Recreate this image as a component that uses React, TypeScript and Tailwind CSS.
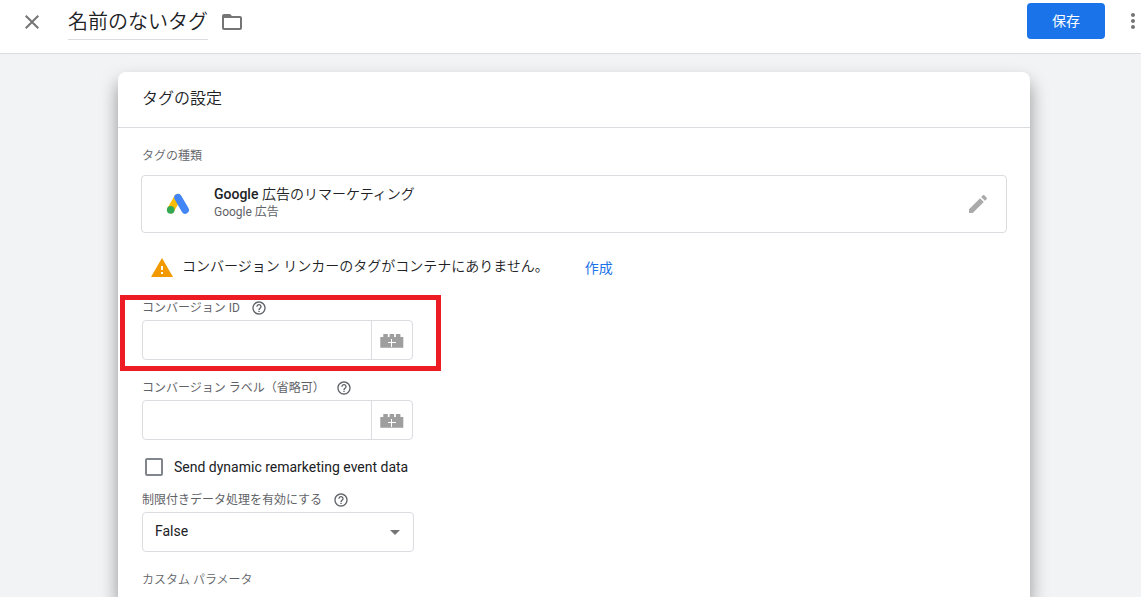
import { useState, type ReactNode } from "react";

function HelpIcon() {
  return (
    <svg viewBox="0 0 24 24" className="size-4 fill-current" aria-hidden="true">
      <path d="M11 18h2v-2h-2v2zm1-16C6.48 2 2 6.48 2 12s4.48 10 10 10 10-4.48 10-10S17.52 2 12 2zm0 18c-4.41 0-8-3.59-8-8s3.59-8 8-8 8 3.59 8 8-3.59 8-8 8zm0-14c-2.21 0-4 1.79-4 4h2c0-1.1.9-2 2-2s2 .9 2 2c0 2-3 1.75-3 5h2c0-2.25 3-2.5 3-5 0-2.21-1.79-4-4-4z" />
    </svg>
  );
}

function BrickIcon() {
  return (
    <svg viewBox="0 0 24 16" className="h-4 w-6" aria-hidden="true">
      <path fill="#9e9e9e" d="M0.300 5H3.300V2h4.500v3h1.800V2h4.500v3h1.800V2h4.500v3h2.900v10.700h-23z" />
      <path fill="#fff" d="M11 7h1v3h4v1h-4v4h-1v-4H8v-1h3z" />
    </svg>
  );
}

function AdsLogo() {
  return (
    <svg viewBox="0 0 24 24" className="size-6 shrink-0" aria-hidden="true">
      <path d="M11.700 5.600 4.800 17.600" stroke="#fbbc04" strokeWidth="7.200" strokeLinecap="round" />
      <path d="M12 5.600 19.200 18" stroke="#4285f4" strokeWidth="7.500" strokeLinecap="round" />
      <circle cx="4.700" cy="17.900" r="3.800" fill="#34a853" />
    </svg>
  );
}

function FieldLabel({ htmlFor, help, children }: { htmlFor: string; help?: boolean; children: ReactNode }) {
  return (
    <div className="flex h-4 items-center gap-[11px] text-xs text-[#5f6368]">
      <label htmlFor={htmlFor}>{children}</label>
      {help && (
        <button type="button" aria-label="ヘルプ">
          <HelpIcon />
        </button>
      )}
    </div>
  );
}

function VariableField({ id, label }: { id: string; label: string }) {
  return (
    <div className="flex flex-col gap-1">
      <FieldLabel htmlFor={id} help>
        {label}
      </FieldLabel>
      <div className="flex h-10 w-[271px] rounded border border-[#dadce0]">
        <input id={id} type="text" className="min-w-0 flex-1 px-3 text-sm outline-none" />
        <button
          type="button"
          aria-label="変数を選択"
          className="flex w-[41px] items-center justify-center border-l border-[#dadce0]"
        >
          <BrickIcon />
        </button>
      </div>
    </div>
  );
}

export default function App() {
  const [name, setName] = useState("名前のないタグ");

  return (
    <div className="flex min-h-screen flex-col bg-[#f1f3f4] font-[Roboto,'Noto_Sans_CJK_JP',sans-serif] text-[#202124]">
      <header className="flex h-[54px] items-start overflow-hidden border-b border-[#dadce0] bg-white pl-5 text-[#757575]">
        <button type="button" aria-label="閉じる" className="mt-[10px]">
          <svg viewBox="0 0 24 24" className="size-6 fill-current">
            <path d="M19 6.410 17.590 5 12 10.590 6.410 5 5 6.410 10.590 12 5 17.590 6.410 19 12 13.410 17.590 19 19 17.590 13.410 12z" />
          </svg>
        </button>
        <input
          aria-label="タグ名"
          value={name}
          onChange={(e) => setName(e.target.value)}
          className="mt-1 ml-6 h-9 w-[140px] border-b border-[#dadce0] pb-[2px] text-xl font-[350] text-[#202124] outline-none"
        />
        <button type="button" aria-label="フォルダ" className="mt-[10px] ml-3">
          <svg viewBox="0 0 24 24" className="size-6 fill-current">
            <path d="M20 6h-8l-2-2H4c-1.100 0-1.990.9-1.990 2L2 18c0 1.100.9 2 2 2h16c1.100 0 2-.9 2-2V8c0-1.100-.9-2-2-2zm0 12H4V8h16v10z" />
          </svg>
        </button>
        <button
          type="button"
          className="mt-[3px] ml-auto h-9 w-[78px] rounded bg-[#1a73e8] text-sm text-white"
        >
          保存
        </button>
        <button type="button" aria-label="その他" className="mt-[9px] -mr-1 ml-4 shrink-0">
          <svg viewBox="0 0 24 24" className="size-6 fill-current">
            <path d="M12 8c1.100 0 2-.9 2-2s-.9-2-2-2-2 .9-2 2 .9 2 2 2zm0 2c-1.100 0-2 .9-2 2s.9 2 2 2 2-.9 2-2-.9-2-2-2zm0 6c-1.100 0-2 .9-2 2s.9 2 2 2 2-.9 2-2-.9-2-2-2z" />
          </svg>
        </button>
      </header>

      <main className="flex flex-1 flex-col overflow-hidden pt-[18px] pr-[111px] pl-[118px]">
        <section className="flex-1 rounded-t-lg bg-white shadow-[0_10px_18px_rgba(0,0,0,0.4)]">
          <h2 className="flex h-14 items-center border-b border-[#dadce0] px-6 pb-[2px] text-base font-[350]">
            タグの設定
          </h2>

          <div className="px-[23px] pt-5">
            <h3 className="pl-px text-xs leading-4 font-[350] text-[#5f6368]">タグの種類</h3>
            <button
              type="button"
              className="mt-[11px] flex h-[58px] w-full items-center rounded border border-[#dadce0] px-4 text-left"
            >
              <span className="pl-2">
                <AdsLogo />
              </span>
              <span className="ml-6 flex flex-col gap-[2px] pb-[2px]">
                <span className="text-sm leading-4 font-medium">
                  Google <span className="font-[350]">広告のリマーケティング</span>
                </span>
                <span className="text-xs leading-4 text-[#5f6368]">Google 広告</span>
              </span>
              <svg viewBox="0 0 24 24" className="ml-auto size-6 fill-[#aaaaaa]" aria-hidden="true">
                <path d="M3 17.250V21h3.750L17.810 9.940l-3.750-3.750L3 17.250zM20.710 7.040c.39-.39.39-1.020 0-1.410l-2.340-2.340c-.39-.39-1.020-.39-1.410 0l-1.830 1.830 3.750 3.750 1.830-1.830z" />
              </svg>
            </button>

            <div className="mt-[23px] flex items-start pl-[9px] text-sm">
              <svg viewBox="0 0 24 24" className="size-6 fill-[#f29900]" aria-hidden="true">
                <path d="M1 21h22L12 2 1 21zm12-3h-2v-2h2v2zm0-4h-2v-4h2v4z" />
              </svg>
              <p className="ml-2 leading-5 font-[350]">コンバージョン リンカーのタグがコンテナにありません。</p>
              <a href="#create" className="ml-9 leading-6 text-[#1a73e8]">
                作成
              </a>
            </div>

            <form className="mt-5 flex flex-col items-start pl-px">
              <div className="relative">
                <VariableField id="conversion-id" label="コンバージョン ID" />
                <div className="pointer-events-none absolute -top-[5px] -right-7 -bottom-[11px] -left-[22px] border-[5px] border-[#ed1c24]" />
              </div>
              <div className="mt-5">
                <VariableField id="conversion-label" label="コンバージョン ラベル（省略可）" />
              </div>

              <label className="mt-4 flex h-[22px] items-center gap-[11px] pl-[3px] text-sm">
                <input
                  type="checkbox"
                  className="size-[18px] appearance-none rounded-[2px] border-2 border-[#80868b] checked:bg-[#1a73e8]"
                />
                Send dynamic remarketing event data
              </label>

              <div className="mt-[14px] flex flex-col gap-1">
                <FieldLabel htmlFor="restricted" help>
                  制限付きデータ処理を有効にする
                </FieldLabel>
                <div className="grid w-[272px]">
                  <select
                    id="restricted"
                    className="col-start-1 row-start-1 h-10 appearance-none rounded border border-[#dadce0] bg-white px-3 pb-[2px] text-sm"
                  >
                    <option>False</option>
                    <option>True</option>
                  </select>
                  <svg
                    viewBox="0 0 24 24"
                    className="pointer-events-none col-start-1 row-start-1 mr-[7px] size-6 self-center justify-self-end fill-[#757575]"
                    aria-hidden="true"
                  >
                    <path d="M7 10l5 5 5-5z" />
                  </svg>
                </div>
              </div>

              <h3 className="mt-5 text-xs leading-4 font-[350] text-[#5f6368]">カスタム パラメータ</h3>
            </form>
          </div>
        </section>
      </main>
    </div>
  );
}
